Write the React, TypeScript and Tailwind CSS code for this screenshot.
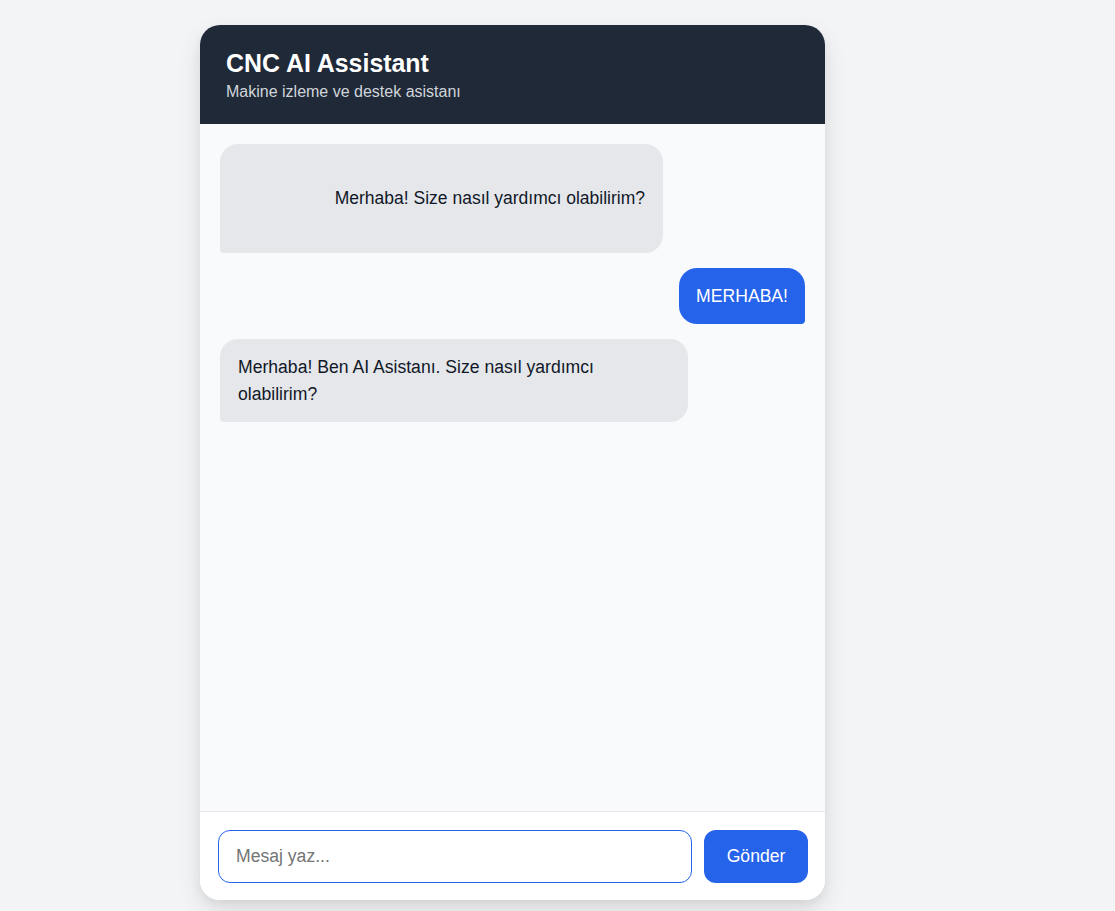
import React from "react";

export default function App() {
  return (
    <div
      className="min-h-[911px] w-full bg-[#f3f4f6] pl-[200px] pt-[25px]"
      style={{ fontFamily: '"Liberation Sans", Arial, sans-serif' }}
    >
      <div className="flex h-[875px] w-[625px] flex-col overflow-hidden rounded-[20px] bg-white shadow-[0_10px_25px_rgba(0,0,0,0.1),0_4px_10px_rgba(0,0,0,0.05)]">
        <div className="h-[99px] shrink-0 bg-[#1f2937] pl-[26px] pr-6 pt-[23px]">
          <h1 className="text-[24.9px] font-bold leading-[30px] text-white">CNC AI Assistant</h1>
          <p className="mt-[4px] text-[16px] leading-[20px] text-[#d1d5db]">Makine izleme ve destek asistanı</p>
        </div>
        <div className="flex flex-1 flex-col gap-[15px] bg-[#f9fafb] p-5">
          <div className="flex justify-start">
            <div className="flex h-[109px] w-[443px] items-center justify-end rounded-[18px] rounded-bl-[4px] bg-[#e5e7eb] px-[18px] text-[17.5px] leading-[27px] text-[#111827]">
              Merhaba! Size nasıl yardımcı olabilirim?
            </div>
          </div>
          <div className="flex justify-end">
            <div className="h-[56px] rounded-[18px] rounded-br-[4px] bg-[#2563eb] px-[17px] py-[14px] text-[17.6px] leading-[28px] text-white">
              MERHABA!
            </div>
          </div>
          <div className="flex justify-start">
            <div className="max-w-[80%] rounded-[18px] rounded-bl-[4px] bg-[#e5e7eb] px-[18px] pb-[14px] pt-[15px] text-[17.6px] leading-[27px] text-[#111827]">
              Merhaba! Ben AI Asistanı. Size nasıl yardımcı olabilirim?
            </div>
          </div>
        </div>
        <div className="flex h-[89px] shrink-0 items-start gap-3 border-t border-[#e5e7eb] bg-white pl-[18px] pr-[17px] pt-[18px]">
          <input
            type="text"
            placeholder="Mesaj yaz..."
            className="h-[53px] flex-1 rounded-xl border border-[#2563eb] px-[17px] text-[17.6px] text-[#111827] placeholder:text-[#757575] outline-none"
            style={{ fontFamily: '"Liberation Sans", Arial, sans-serif' }}
          />
          <button
            className="h-[53px] w-[104px] rounded-xl bg-[#2563eb] text-[17.6px] text-white"
            style={{ fontFamily: '"Liberation Sans", Arial, sans-serif' }}
          >
            Gönder
          </button>
        </div>
      </div>
    </div>
  );
}
